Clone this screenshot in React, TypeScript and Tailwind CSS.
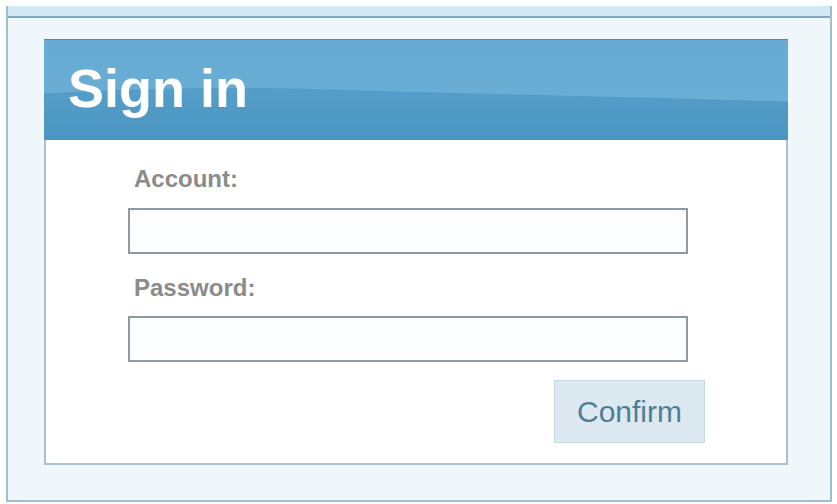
import React from "react";

// Header gloss: lighter upper band with a soft curved lower edge
function HeaderGloss() {
  return (
    <svg
      className="absolute inset-0 h-full w-full"
      viewBox="0 0 744 101"
      preserveAspectRatio="none"
      aria-hidden
    >
      <defs>
        <linearGradient id="gloss" x1="0" y1="0" x2="0" y2="1">
          <stop offset="0" stopColor="#6fb2d8" stopOpacity="0.45" />
          <stop offset="1" stopColor="#74b5da" stopOpacity="0.75" />
        </linearGradient>
      </defs>
      <path d="M0 0 H744 V62 C600 58 420 54 250 49 C150 47 60 50 0 54 Z" fill="url(#gloss)" />
    </svg>
  );
}

function Field({ label, id, type, gap }: { label: string; id: string; type: string; gap: string }) {
  return (
    <label htmlFor={id} className="block">
      <span className="block pl-[6px] text-[24px] leading-none font-bold text-[#8b8b8b]">{label}</span>
      <input
        id={id}
        type={type}
        className={`${gap} block h-[46px] w-[560px] border-2 border-[#8e9ba2] bg-[#fcfeff] px-2 outline-none`}
      />
    </label>
  );
}

export default function App() {
  return (
    <div
      className="h-[504px] w-[837px] overflow-hidden bg-white pl-[6px] pt-[6px]"
      style={{ fontFamily: '"Liberation Sans", Arial, sans-serif' }}
    >
      <div className="flex h-[496px] w-[826px] flex-col border-x-2 border-b-2 border-[#9fbfcd] bg-[#eff7fa]">
        {/* top strip */}
        <div className="h-[12px] shrink-0 border-b-2 border-[#7eabc6] bg-[#d4e9f6]" />

        <div className="pl-[36px] pt-[21px]">
          <div className="w-[744px]">
            <div className="relative h-[101px] border-t border-[#4a8cb4] bg-gradient-to-b from-[#5ea6d0] to-[#4b95c2] pl-[24px] pt-[21px]">
              <HeaderGloss />
              <h1 className="relative text-[54px] leading-none font-bold text-white">Sign in</h1>
            </div>

            <div className="h-[325px] border-x-2 border-b-2 border-[#a9c2ce] bg-white pl-[82px] pt-[27px]">
              <Field label="Account:" id="account" type="text" gap="mt-[17px]" />
              <div className="mt-[22px]">
                <Field label="Password:" id="password" type="password" gap="mt-[16px]" />
              </div>
              <div className="flex w-[577px] justify-end pt-[18px]">
                <button
                  type="button"
                  className="h-[63px] w-[151px] border border-[#c6d8e2] bg-[#dce9f1] text-[30px] leading-none text-[#4f7f95]"
                >
                  Confirm
                </button>
              </div>
            </div>
          </div>
        </div>
      </div>
    </div>
  );
}
